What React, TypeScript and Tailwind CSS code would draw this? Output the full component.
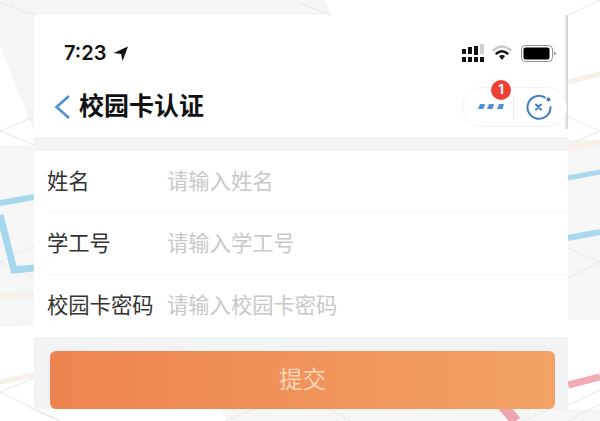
const cjk = "font-['Inter','Noto_Sans_CJK_SC',sans-serif]";

function MapBackdrop() {
  return (
    <svg className="absolute inset-0" width="600" height="421" viewBox="0 0 600 421" fill="none">
      <rect width="600" height="421" fill="#ffffff" />
      <polygon points="0,0 325,0 331,15 34,15 34,132 0,45" fill="#f5f5f5" />
      <polygon points="0,145 34,145 34,326 0,327" fill="#f6f6f6" />
      <polygon points="568,140 600,140 600,320 568,320" fill="#f6f6f6" />
      <polygon points="220,409 600,409 600,421 228,421" fill="#f6f6f6" />
      <g stroke="#e6e6e6" strokeWidth="1">
        <path d="M0 3 L34 15 M0 131 L34 117 M0 131 L34 145 M0 262 L34 246 M0 262 L34 278" />
        <path d="M0 392 L34 378 M0 392 L60 421 M30 408 L60 421 M568 15 L600 0 M568 117 L600 131 L568 145" />
        <path d="M568 248 L600 262 L568 278 M568 405 L600 390 M568 421 L600 404 M300 3 L330 15" />
        <path d="M225 421 L255 409 M330 409 L350 421 M522 421 L560 405" />
      </g>
      <path d="M0 203 L34 197" stroke="#a5d8ec" strokeWidth="6" />
      <path d="M0 215 L14 270 L34 268" stroke="#a5d8ec" strokeWidth="7" />
      <path d="M568 238 L600 232" stroke="#a8d9ec" strokeWidth="6" />
      <path d="M568 178 L600 172" stroke="#a8d9ec" strokeWidth="5" />
      <path d="M568 82 L600 74 M568 148 L600 142 M0 296 L34 294 M0 382 L34 375" stroke="#f7f0e6" strokeWidth="5" />
      <path d="M568 385 L600 377" stroke="#f1abb5" strokeWidth="7" />
      <path d="M502 405 L516 421" stroke="#eca6ae" strokeWidth="11" />
    </svg>
  );
}

function StatusIcons() {
  return (
    <div className="flex items-center gap-[8px]">
      <svg width="22" height="18" viewBox="0 0 22 18">
        <g fill="#111">
          <rect x="0" y="5" width="4" height="5" />
          <rect x="0" y="13" width="4" height="5" />
          <rect x="6" y="3" width="4" height="7" />
          <rect x="6" y="13" width="4" height="5" />
          <rect x="12" y="2" width="4" height="9" />
          <rect x="12" y="13" width="4" height="5" />
          <rect x="18" y="13" width="4" height="5" />
        </g>
        <rect x="18" y="0" width="4" height="10" fill="#cfcfcf" />
      </svg>
      <svg width="20" height="16" viewBox="0 0 20 16" fill="none" strokeLinecap="round">
        <path d="M1.500 5 C7 0.500 13 0.500 18.500 5" stroke="#c9c9c9" strokeWidth="2.400" />
        <path d="M4.500 8.500 C8 5.500 12 5.500 15.500 8.500" stroke="#111" strokeWidth="2.400" />
        <path d="M7 11 L10 15 L13 11 C11 9.500 9 9.500 7 11 Z" fill="#111" />
      </svg>
      <svg className="ml-px" width="36" height="17" viewBox="0 0 36 17">
        <rect x="0.500" y="0.500" width="31" height="16" rx="4" fill="none" stroke="#8f8f8f" />
        <rect x="2.500" y="2.500" width="26" height="12" rx="2" fill="#000" />
        <path d="M33 6.500 L35.500 8.500 L33 10.500 Z" fill="#8f8f8f" />
      </svg>
    </div>
  );
}

function Capsule() {
  return (
    <div className="relative mr-px flex h-[40px] w-[105px] items-center rounded-full border border-[#f3f3f3] bg-white">
      <span className="absolute left-[28px] top-[-8px] flex h-[20px] w-[20px] items-center justify-center rounded-full bg-[#ee4035] text-[13px] font-bold text-white">
        1
      </span>
      <svg className="ml-[15px]" width="26" height="8" viewBox="0 0 26 8" fill="#4a8fd8">
        <polygon points="2,1 7,1 5.500,6 0,6" />
        <polygon points="11,1 16,1 14.500,6 9,6" />
        <polygon points="21,1 26,1 24.500,6 19,6" />
      </svg>
      <div className="ml-[9px] h-[24px] w-px bg-[#dce8f2]" />
      <svg className="ml-[12px]" width="26" height="26" viewBox="0 0 26 26" fill="none" stroke="#3f7fc8" strokeWidth="2">
        <path d="M19 3.500 A11.500 11.500 0 1 0 24.500 13" strokeLinecap="round" />
        <path d="M10 10.500 L15 15.500 M15 10.500 L10 15.500" strokeLinecap="round" />
        <circle cx="22.500" cy="5.500" r="2" fill="#3f7fc8" stroke="none" />
      </svg>
    </div>
  );
}

function FormRow({ label, hint, line }: { label: string; hint: string; line?: boolean }) {
  return (
    <div className={`flex h-[62px] items-center ${line ? "border-b border-[#f4f4f4]" : ""}`}>
      <span className="w-[120px] shrink-0 text-[21.3px] text-[#333333]">{label}</span>
      <span className="text-[21.3px] text-[#c8c8c8]">{hint}</span>
    </div>
  );
}

export default function App() {
  return (
    <div className={`relative h-[421px] w-[600px] overflow-hidden ${cjk}`}>
      <MapBackdrop />
      <div className="relative ml-[34px] w-[534px] pt-[15px]">
        <div className="relative h-[122px] bg-white pt-[24px]">
          {/* edge shadow of the screenshot pasted on the map */}
          <div className="absolute right-0 top-0 h-[114px] w-[4px] bg-gradient-to-r from-white to-[#cdcdcd]" />
          <div className="flex h-[28px] items-center justify-between pl-[30px] pr-[11px]">
            <div className="flex items-center gap-[7px]">
              <span className="text-[20px] font-semibold text-[#111]">7:23</span>
              <svg width="15" height="15" viewBox="0 0 14 14" fill="#111">
                <path d="M0.500 6.500 L14 0.500 L9 14 L7.500 7.500 Z" />
              </svg>
            </div>
            <StatusIcons />
          </div>
          <div className="relative mt-[20px] flex items-center justify-between pl-[20px]">
            <div className="flex items-center gap-[9px]">
              <svg width="16" height="24" viewBox="0 0 16 24" fill="none" stroke="#4a90d9" strokeWidth="2.600">
                <path d="M15 1 L2.500 12 L15 23" />
              </svg>
              <h1 className="text-[25px] font-bold text-[#111]">校园卡认证</h1>
            </div>
            <Capsule />
          </div>
        </div>
        <div className="h-[14px] bg-[#f3f3f3]" />
        <div className="bg-white pl-[13px]">
          <FormRow label="姓名" hint="请输入姓名" line />
          <FormRow label="学工号" hint="请输入学工号" line />
          <FormRow label="校园卡密码" hint="请输入校园卡密码" />
        </div>
        <div className="bg-[#f2f3f4] px-[16px] pt-[14px]">
          <button className="block h-[58px] w-[505px] rounded-[6px] bg-gradient-to-r from-[#ee8350] to-[#f2a265] text-[23.5px] text-[#fbd4b8]">
            提交
          </button>
        </div>
      </div>
    </div>
  );
}
